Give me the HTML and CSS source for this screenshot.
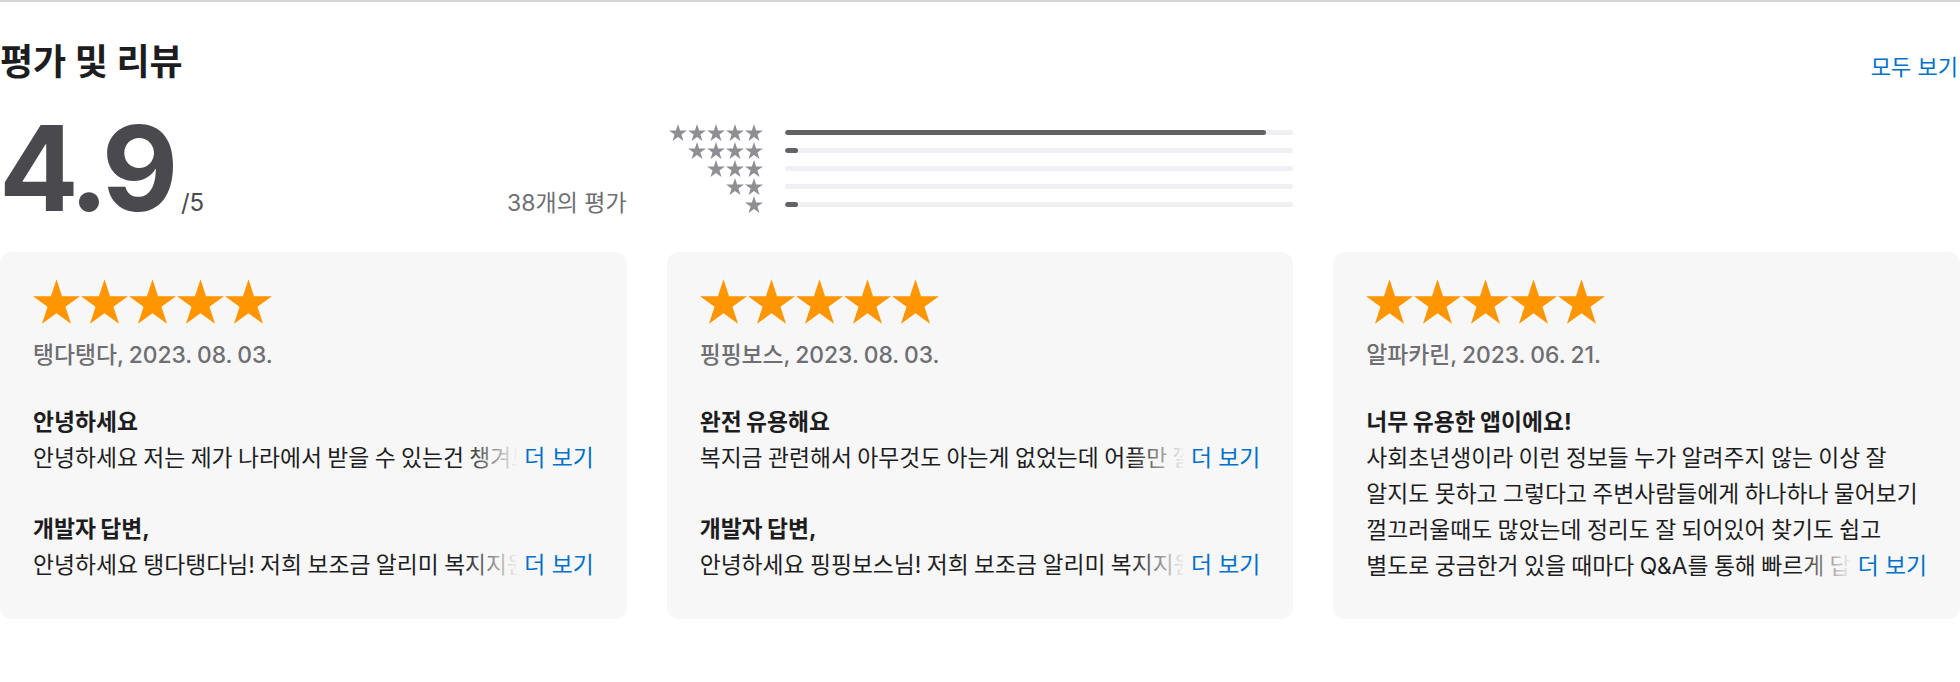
FILE: index.html
```html
<!DOCTYPE html>
<html lang="ko">
<head>
    <meta charset="UTF-8">
    <meta name="viewport" content="width=device-width, initial-scale=1.0">
    <title>평가 및 리뷰</title>
    <link rel="stylesheet" href="styles.css">
</head>
<body>
    <svg class="defs" aria-hidden="true">
        <symbol id="star" viewBox="0 0 24 22.83">
            <path d="M12 0L14.83 8.72H24L16.58 14.11L19.42 22.83L12 17.44L4.58 22.83L7.42 14.11L0 8.72H9.17Z"/>
        </symbol>
    </svg>

    <section class="ratings">
        <header class="section-header">
            <h2 class="section-title">평가 및 리뷰</h2>
            <a class="see-all" href="#">모두 보기</a>
        </header>

        <div class="summary">
            <div class="average">
                <div class="score"><span class="score-value">4.9</span><span class="score-max">/5</span></div>
                <div class="count">38개의 평가</div>
            </div>

            <div class="histogram">
                <div class="hist-stars">
                    <svg><use href="#star"/></svg><svg><use href="#star"/></svg><svg><use href="#star"/></svg><svg><use href="#star"/></svg><svg><use href="#star"/></svg>
                </div>
                <div class="bar"><div class="bar-fill" style="width: 94.7%"></div></div>

                <div class="hist-stars">
                    <svg><use href="#star"/></svg><svg><use href="#star"/></svg><svg><use href="#star"/></svg><svg><use href="#star"/></svg>
                </div>
                <div class="bar"><div class="bar-fill" style="width: 2.6%"></div></div>

                <div class="hist-stars">
                    <svg><use href="#star"/></svg><svg><use href="#star"/></svg><svg><use href="#star"/></svg>
                </div>
                <div class="bar"><div class="bar-fill" style="width: 0%"></div></div>

                <div class="hist-stars">
                    <svg><use href="#star"/></svg><svg><use href="#star"/></svg>
                </div>
                <div class="bar"><div class="bar-fill" style="width: 0%"></div></div>

                <div class="hist-stars">
                    <svg><use href="#star"/></svg>
                </div>
                <div class="bar"><div class="bar-fill" style="width: 2.6%"></div></div>
            </div>
        </div>

        <div class="reviews">
            <article class="review">
                <div class="review-stars">
                    <svg><use href="#star"/></svg><svg><use href="#star"/></svg><svg><use href="#star"/></svg><svg><use href="#star"/></svg><svg><use href="#star"/></svg>
                </div>
                <div class="review-meta">탱다탱다, 2023. 08. 03.</div>
                <h3 class="review-title">안녕하세요</h3>
                <div class="clamp clamp-1">
                    <p>안녕하세요 저는 제가 나라에서 받을 수 있는건 챙겨보고 싶었는데 어디서 찾아봐야 할지 몰라서 막막했어요. 이 앱 덕분에 한눈에 볼 수 있어서 좋아요.</p>
                    <a class="more" href="#">더 보기</a>
                </div>
                <h3 class="review-title response-title">개발자 답변,</h3>
                <div class="clamp clamp-1">
                    <p>안녕하세요 탱다탱다님! 저희 보조금 알리미 복지지원금 앱을 이용해 주셔서 감사합니다. 앞으로도 더 좋은 서비스로 보답하겠습니다.</p>
                    <a class="more" href="#">더 보기</a>
                </div>
            </article>

            <article class="review">
                <div class="review-stars">
                    <svg><use href="#star"/></svg><svg><use href="#star"/></svg><svg><use href="#star"/></svg><svg><use href="#star"/></svg><svg><use href="#star"/></svg>
                </div>
                <div class="review-meta">핑핑보스, 2023. 08. 03.</div>
                <h3 class="review-title">완전 유용해요</h3>
                <div class="clamp clamp-1">
                    <p>복지금 관련해서 아무것도 아는게 없었는데 어플만 깔면 제가 받을 수 있는 지원금을 알려줘서 너무 편해요.</p>
                    <a class="more" href="#">더 보기</a>
                </div>
                <h3 class="review-title response-title">개발자 답변,</h3>
                <div class="clamp clamp-1">
                    <p>안녕하세요 핑핑보스님! 저희 보조금 알리미 복지지원금 앱을 이용해 주셔서 감사합니다. 앞으로도 더 좋은 서비스로 보답하겠습니다.</p>
                    <a class="more" href="#">더 보기</a>
                </div>
            </article>

            <article class="review">
                <div class="review-stars">
                    <svg><use href="#star"/></svg><svg><use href="#star"/></svg><svg><use href="#star"/></svg><svg><use href="#star"/></svg><svg><use href="#star"/></svg>
                </div>
                <div class="review-meta">알파카린, 2023. 06. 21.</div>
                <h3 class="review-title">너무 유용한 앱이에요!</h3>
                <div class="clamp clamp-4">
                    <p>사회초년생이라 이런 정보들 누가 알려주지 않는 이상 잘 알지도 못하고 그렇다고 주변사람들에게 하나하나 물어보기 껄끄러울때도 많았는데 정리도 잘 되어있어 찾기도 쉽고 별도로 궁금한거 있을 때마다 Q&amp;A를 통해 빠르게 답장해 주셔서 너무 좋아요.</p>
                    <a class="more" href="#">더 보기</a>
                </div>
            </article>
        </div>
    </section>
</body>
</html>
```

FILE: styles.css
```css
body {
    margin: 0;
    font-family: "Inter", "Noto Sans CJK KR", sans-serif;
    color: #1d1d1f;
    background: #fff;
}

.defs {
    position: absolute;
    width: 0;
    height: 0;
}

.ratings {
    border-top: 2px solid #d6d6d6;
    padding-top: 40px;
}

.section-header {
    display: flex;
    justify-content: space-between;
    align-items: baseline;
}

.section-title {
    margin: 0;
    font-size: 36px;
    line-height: 40px;
    font-weight: 700;
    color: #1d1d1f;
}

.see-all {
    font-size: 22px;
    color: #0070c9;
    text-decoration: none;
    margin-right: 2px;
}

.summary {
    display: grid;
    grid-template-columns: repeat(3, 1fr);
    column-gap: 40px;
    margin-top: 38px;
}

.average {
    display: flex;
    justify-content: space-between;
    align-items: baseline;
}

.score-value {
    font-size: 118px;
    line-height: 96px;
    font-weight: 700;
    letter-spacing: -5.5px;
    color: #4a4a4e;
    margin-left: -1px;
}

.score-max {
    font-size: 24px;
    color: #4a4a4e;
    margin-left: 8px;
}

.count {
    font-size: 23px;
    color: #6e6e73;
}

.histogram {
    display: grid;
    grid-template-columns: 96px 1fr;
    column-gap: 22px;
    grid-auto-rows: 18px;
    align-items: center;
    margin-top: 3px;
}

.hist-stars {
    display: flex;
    justify-content: flex-end;
    gap: 1px;
    fill: #8e8e93;
}

.hist-stars svg {
    width: 18px;
    height: 17px;
}

.bar {
    height: 5px;
    border-radius: 3px;
    background: #efeff4;
    overflow: hidden;
}

.bar-fill {
    height: 100%;
    border-radius: 3px;
    background: #636366;
}

.reviews {
    display: grid;
    grid-template-columns: repeat(3, 1fr);
    column-gap: 40px;
    margin-top: 34px;
}

.review {
    background: #f7f7f7;
    border-radius: 12px;
    padding: 27px 33px 35px;
    font-size: 22.8px;
    line-height: 36px;
    word-spacing: -1px;
}

.review-stars {
    display: flex;
    gap: 1px;
    fill: #ff9500;
}

.review-stars svg {
    width: 47px;
    height: 45px;
}

.review-meta {
    margin-top: 13px;
    color: #6e6e73;
    font-weight: 500;
}

.review-title {
    margin: 31px 0 0;
    font-size: 22.8px;
    font-weight: 700;
}

.response-title {
    margin-top: 35px;
}

.clamp {
    position: relative;
    overflow: hidden;
}

.clamp-1 {
    max-height: 36px;
}

.clamp-4 {
    max-height: 144px;
}

.clamp p {
    margin: 0;
    word-break: keep-all;
}

.more {
    position: absolute;
    right: 0;
    bottom: 0;
    padding-left: 60px;
    background: linear-gradient(to right, rgba(247, 247, 247, 0), #f7f7f7 54px);
    color: #0070c9;
    text-decoration: none;
    word-spacing: 0;
}
```
